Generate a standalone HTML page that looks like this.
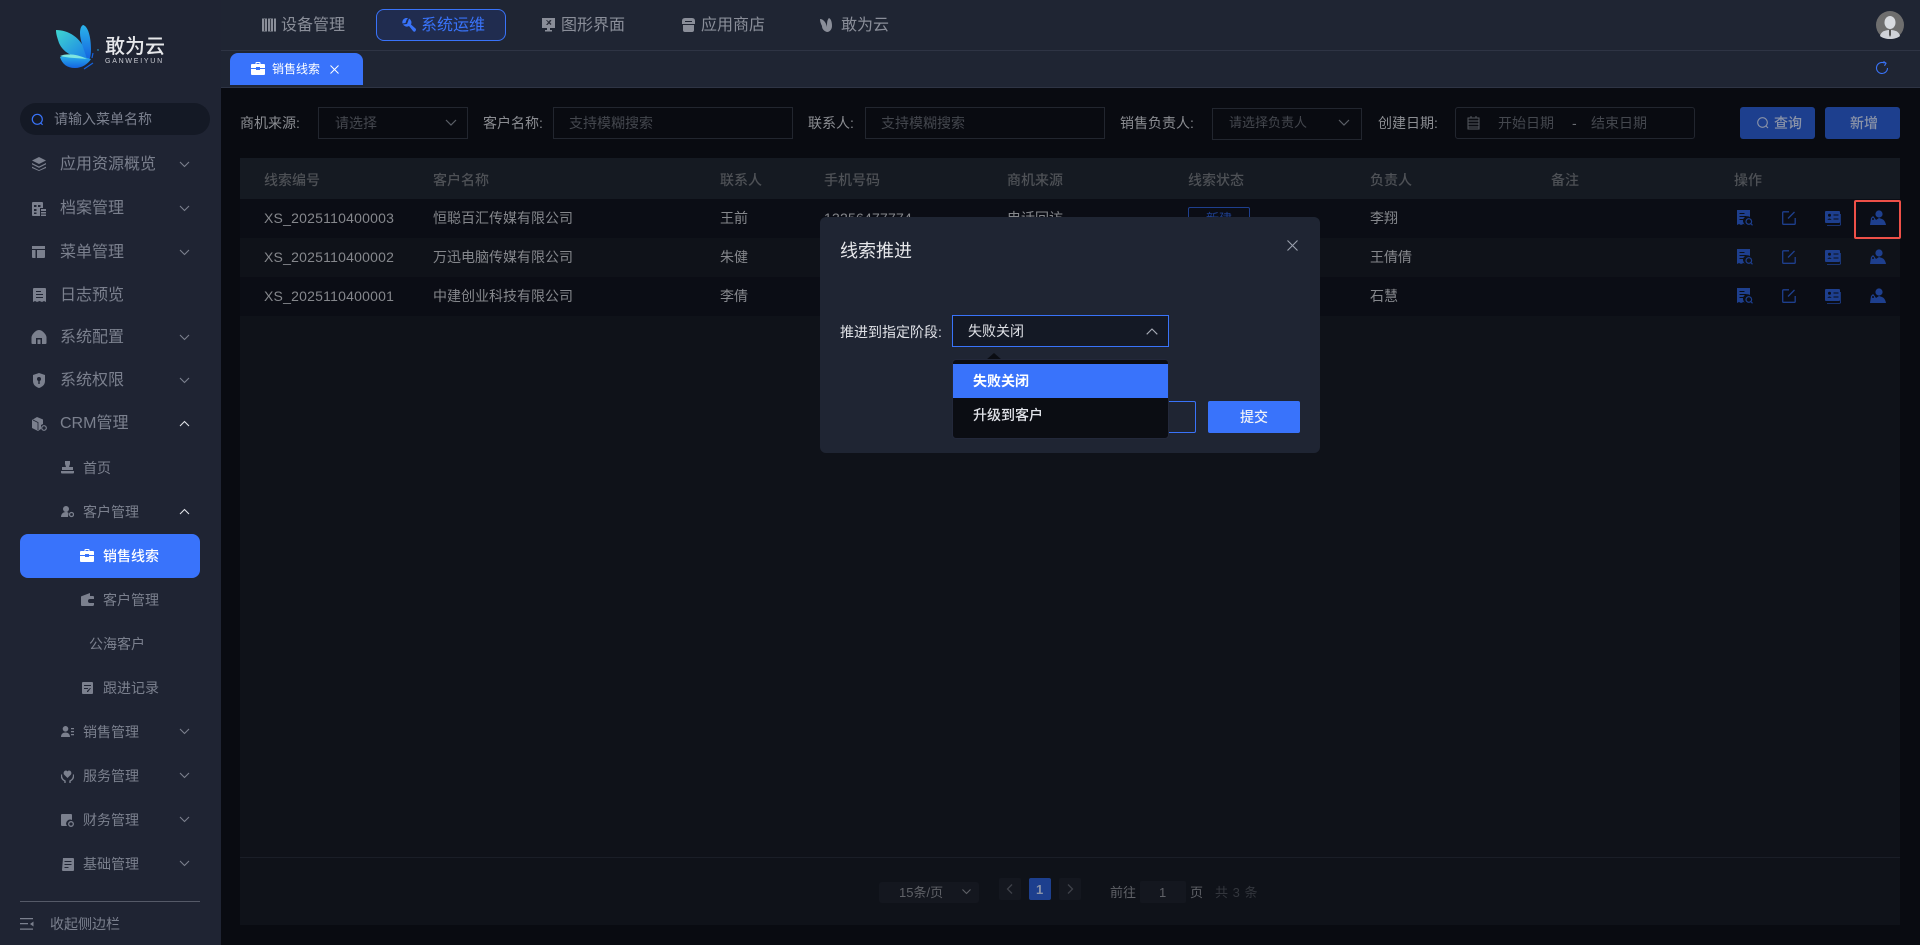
<!DOCTYPE html>
<html lang="zh"><head><meta charset="utf-8"><title>销售线索</title>
<style>
*{box-sizing:border-box}
html,body{margin:0;padding:0;width:1920px;height:945px;overflow:hidden;background:#090b11;font-family:"Liberation Sans","Noto Sans CJK SC",sans-serif}
.b{position:absolute}
.t{position:absolute;white-space:nowrap;line-height:20px;height:20px;font-size:14px}
svg{position:absolute;display:block}
.m{color:#7b808e;font-size:16px}
.s{color:#7b808e;font-size:14px}
.n{color:#8a8e99;font-size:16px}
.l{color:#8b8d92;font-size:14px}
.h{color:#4e5156;font-size:14px;font-weight:500}
.d{color:#85878c;font-size:14px}
.x{letter-spacing:.22px}
.p{color:#44474e;font-size:14px}
.ic{fill:#7b808e}
.ch{fill:none;stroke:#7b808e;stroke-width:1.1}
.cw{fill:none;stroke:#e0e2e8;stroke-width:1.1}
.a{fill:#1e3f8e}
</style></head><body>

<!-- sidebar -->
<div class="b" style="left:0;top:0;width:221px;height:945px;background:#1f2433"></div>
<svg style="left:54px;top:23px" width="48" height="48" viewBox="0 0 48 48">
<defs><linearGradient id="g1" x1="0" y1="0" x2="1" y2="1"><stop offset="0" stop-color="#3fd6d0"/><stop offset="1" stop-color="#1a7fe8"/></linearGradient>
<linearGradient id="g2" x1="0" y1="0" x2="0" y2="1"><stop offset="0" stop-color="#2bb4ea"/><stop offset="1" stop-color="#1463e0"/></linearGradient></defs>
<path d="M2 7C14 7 27 14 33 31 34 35 32 36 29 35 18 34 9 29 5 20 3 14 2 11 2 7Z" fill="url(#g1)"/>
<path d="M29 2C34 3 37 14 37 26 37 33 36 38 33 36 30 26 26 18 26 10 26 6 27 3 29 2Z" fill="url(#g2)"/>
<path d="M6 34C14 31 26 33 37 36 34 41 28 45 21 45 13 45 8 41 6 34Z" fill="url(#g2)"/>
<path d="M6 33C12 30 24 31 33 36 23 35 14 35 6 33Z" fill="#7fe6e0"/>
<path d="M30 46l9-6M39 30l-1 5" stroke="#1463e0" stroke-width="1.200" fill="none"/>
<circle cx="44" cy="27" r=".7" fill="#2bb4ea"/>
</svg>
<span class="t" style="left:105px;top:36px;font-size:20px;line-height:22px;height:22px;color:#e6e7ea;font-weight:500">敢为云</span>
<span class="t" style="left:105px;top:57px;font-size:7px;line-height:10px;height:10px;color:#c9cbd2;letter-spacing:1.75px">GANWEIYUN</span>

<div class="b" style="left:20px;top:103px;width:190px;height:32px;border-radius:16px;background:#141925"></div>
<svg style="left:31px;top:113px" width="13" height="13" viewBox="0 0 13 13"><circle cx="6.300" cy="6.300" r="5" fill="none" stroke="#3973f9" stroke-width="1.200"/><path d="M9.800 10l1.800 1.800" stroke="#3973f9" stroke-width="1.200"/></svg>
<span class="t s" style="left:54px;top:109px">请输入菜单名称</span>

<!-- main menu icons -->
<svg style="left:32px;top:157px" width="14" height="14" viewBox="0 0 14 14"><path class="ic" d="M7 0l7 3.500-7 3.500-7-3.500zM0 6l7 3.500 7-3.500v1.400l-7 3.500-7-3.500zM0 9.600l7 3.500 7-3.500V11l-7 3-7-3z"/></svg>
<span class="t m" style="left:60px;top:155px">应用资源概览</span>
<svg style="left:32px;top:202px" width="14" height="14" viewBox="0 0 14 14"><path class="ic" d="M1 0h9q1 0 1 1v5H8v8H1q-1 0-1-1V1q0-1 1-1zM9 7h5v2H9zM9 10h5v1.500H9zM9 12.500h5V14H9z"/><path d="M2 3h2.500v2H2zM6 3h2.500v2H6zM2 7h2.500v2H2zM2 10.500h2.500v1.500H2z" fill="#1f2433"/></svg>
<span class="t m" style="left:60px;top:199px">档案管理</span>
<svg style="left:32px;top:245px" width="14" height="14" viewBox="0 0 14 14"><path class="ic" d="M0 1h13v3H0zM0 5h3.500v8H1q-1 0-1-1zM5 5h8v7q0 1-1 1H5z"/></svg>
<span class="t m" style="left:60px;top:243px">菜单管理</span>
<svg style="left:33px;top:288px" width="13" height="14" viewBox="0 0 13 14"><path class="ic" d="M0 1q0-1 1-1h11q1 0 1 1v13l-2-1-2 1-2.500-1L4 14l-2-1-2 1z"/><path d="M3 3h5v1H3zM3 6h7v1H3zM3 9h7v1H3z" fill="#1f2433"/></svg>
<span class="t m" style="left:60px;top:286px">日志预览</span>
<svg style="left:31px;top:330px" width="16" height="14" viewBox="0 0 16 14"><path class="ic" d="M8 0c3 0 7 4 7.500 7v6q0 1-1 1H1.500q-1 0-1-1V7C1 4 5 0 8 0z"/><path d="M5 8h6v6H5z" fill="#1f2433"/><path d="M6.500 9.500h3V14h-3z" class="ic"/></svg>
<span class="t m" style="left:60px;top:328px">系统配置</span>
<svg style="left:32px;top:373px" width="14" height="15" viewBox="0 0 14 15"><path class="ic" d="M7 0l6 2v6c0 4-3 6-6 7-3-1-6-3-6-7V2z"/><circle cx="7" cy="6" r="2" fill="#1f2433"/><path d="M6.300 7h1.400v4H6.300z" fill="#1f2433"/></svg>
<span class="t m" style="left:60px;top:371px">系统权限</span>
<svg style="left:32px;top:417px" width="15" height="14" viewBox="0 0 15 14"><path class="ic" d="M5 0l6 2.500v4.500l-2 1v4l-3 2-6-3V3z"/><path d="M1 3l5 2.500V13" fill="none" stroke="#1f2433" stroke-width=".8"/><circle cx="12" cy="11" r="2.300" fill="none" stroke="#7b808e" stroke-width="1.200"/></svg>
<span class="t m" style="left:60px;top:414px;font-size:16px">CRM管理</span>

<svg style="left:61px;top:461px" width="13" height="13" viewBox="0 0 13 13"><path class="ic" d="M4 0h5v3L8 6h4v3H1V6h4L4 3zM0 10h13v1.500q0 1-1 1H1q-1 0-1-1z"/></svg>
<span class="t s" style="left:83px;top:458px">首页</span>
<svg style="left:61px;top:506px" width="13" height="12" viewBox="0 0 13 12"><circle cx="5" cy="3" r="3" class="ic"/><path class="ic" d="M0 11c0-3 2-5 5-5 1 0 2 .3 2.500 1L7 11z"/><circle cx="10.500" cy="8.500" r="2" fill="none" stroke="#7b808e" stroke-width="1.300"/></svg>
<span class="t s" style="left:83px;top:502px">客户管理</span>

<div class="b" style="left:20px;top:534px;width:180px;height:44px;border-radius:8px;background:#3973fb"></div>
<svg style="left:80px;top:549px" width="14" height="13" viewBox="0 0 14 13"><path fill="#fff" d="M4.500 2V1q0-1 1-1h3q1 0 1 1v1H13q1 0 1 1v3H9V5H5v1H0V3q0-1 1-1zM5.500 1v1h3V1zM0 7h5v1h4V7h5v5q0 1-1 1H1q-1 0-1-1z"/></svg>
<span class="t" style="left:103px;top:546px;color:#fff;font-weight:500">销售线索</span>

<svg style="left:81px;top:593px" width="13" height="13" viewBox="0 0 13 13"><path class="ic" d="M0 4q0-1 1-1l8-3v3h3q1 0 1 1v2H9q-2 0-2 2t2 2h4v1.500q0 1.500-1.500 1.500H1q-1 0-1-1z"/></svg>
<span class="t s" style="left:103px;top:590px">客户管理</span>
<span class="t s" style="left:89px;top:634px">公海客户</span>
<svg style="left:82px;top:682px" width="11" height="12" viewBox="0 0 11 12"><path class="ic" d="M1 0h9q1 0 1 1v10q0 1-1 1H1q-1 0-1-1V1q0-1 1-1z"/><path d="M2 3h7v1H2zM2 6h4v1H2zM9 6L6 10H5V9l3-3z" fill="#1f2433"/></svg>
<span class="t s" style="left:103px;top:678px">跟进记录</span>
<svg style="left:61px;top:726px" width="13" height="11" viewBox="0 0 13 11"><circle cx="4.500" cy="2.800" r="2.800" class="ic"/><path class="ic" d="M0 11c0-3 2-4.500 4.500-4.500S9 8 9 11zM10 2h3v1.300h-3zM10 5h3v1.300h-3zM10 8h3v1.300h-3z"/></svg>
<span class="t s" style="left:83px;top:722px">销售管理</span>
<svg style="left:61px;top:770px" width="13" height="13" viewBox="0 0 13 13"><path class="ic" d="M6.500 8L3 4.500C2 3 3 .5 5 .5c.7 0 1.200.4 1.500 1 .3-.6.800-1 1.500-1 2 0 3 2.500 2 4z"/><path d="M.5 4.500C0 8 2 10 4 11v2M12.500 4.500C13 8 11 10 9 11v2" fill="none" stroke="#7b808e" stroke-width="1.400"/></svg>
<span class="t s" style="left:83px;top:766px">服务管理</span>
<svg style="left:61px;top:814px" width="13" height="13" viewBox="0 0 13 13"><path class="ic" d="M1 0h9q1 0 1 1v5a4 4 0 0 0-5 6H1q-1 0-1-1V1q0-1 1-1z"/><circle cx="10" cy="10" r="2.300" fill="none" stroke="#7b808e" stroke-width="1.300"/></svg>
<span class="t s" style="left:83px;top:810px">财务管理</span>
<svg style="left:61px;top:858px" width="13" height="13" viewBox="0 0 13 13"><path class="ic" d="M2 0h10q1 0 1 1v11q0 1-1 1H2q-1 0-1-1z"/><path d="M3.500 3h7v1h-7zM3.500 6h7v1h-7zM3.500 9h4v1h-4z" fill="#1f2433"/></svg>
<span class="t s" style="left:83px;top:854px">基础管理</span>

<!-- chevrons -->
<svg style="left:179px;top:161px" width="11" height="7"><path class="ch" d="M1 1l4.500 4.500L10 1"/></svg>
<svg style="left:179px;top:205px" width="11" height="7"><path class="ch" d="M1 1l4.500 4.500L10 1"/></svg>
<svg style="left:179px;top:249px" width="11" height="7"><path class="ch" d="M1 1l4.500 4.500L10 1"/></svg>
<svg style="left:179px;top:334px" width="11" height="7"><path class="ch" d="M1 1l4.500 4.500L10 1"/></svg>
<svg style="left:179px;top:377px" width="11" height="7"><path class="ch" d="M1 1l4.500 4.500L10 1"/></svg>
<svg style="left:179px;top:420px" width="11" height="7"><path class="cw" d="M1 6l4.500-4.500L10 6"/></svg>
<svg style="left:179px;top:508px" width="11" height="7"><path class="cw" d="M1 6l4.500-4.500L10 6"/></svg>
<svg style="left:179px;top:728px" width="11" height="7"><path class="ch" d="M1 1l4.500 4.500L10 1"/></svg>
<svg style="left:179px;top:772px" width="11" height="7"><path class="ch" d="M1 1l4.500 4.500L10 1"/></svg>
<svg style="left:179px;top:816px" width="11" height="7"><path class="ch" d="M1 1l4.500 4.500L10 1"/></svg>
<svg style="left:179px;top:860px" width="11" height="7"><path class="ch" d="M1 1l4.500 4.500L10 1"/></svg>

<div class="b" style="left:20px;top:901px;width:180px;height:1px;background:#555a68"></div>
<svg style="left:20px;top:918px" width="14" height="12" viewBox="0 0 14 12"><path class="ic" d="M0 0h13v1.200H0zM0 5h8v1.200H0zM0 10.500h13v1.200H0zM13.500 3.500v5L10 6z"/></svg>
<span class="t s" style="left:50px;top:914px">收起侧边栏</span>

<!-- top bar -->
<div class="b" style="left:221px;top:0;width:1699px;height:88px;background:#1f2533"></div>
<div class="b" style="left:221px;top:50px;width:1699px;height:1px;background:#2e3444"></div>
<div class="b" style="left:221px;top:87px;width:1699px;height:1px;background:#2e3444"></div>

<svg style="left:262px;top:18px" width="14" height="14" viewBox="0 0 14 14"><path fill="#8a8e99" d="M0 .5h5v13H0zM6 .5h5v13H6zM12 .5h2v13h-2z"/><path fill="#3a3e49" d="M2 1h1v12H2zM8 1h1v12H8z"/></svg>
<span class="t n" style="left:281px;top:16px">设备管理</span>
<div class="b" style="left:376px;top:9px;width:130px;height:32px;border:1px solid #3973f9;border-radius:8px;background:#202c4f"></div>
<svg style="left:402px;top:18px" width="14" height="14" viewBox="0 0 14 14"><path fill="#3973f9" d="M6 0a4.500 4.500 0 0 0-5.500 5.500l3-.5 1-3zM1 6.500a4.500 4.500 0 0 0 6 1.500l4 5q1.500 1.500 2.500 0t0-2.500L9 6.500A4.500 4.500 0 0 0 7 .5L6 3.500 5 6z"/></svg>
<span class="t" style="left:421px;top:16px;font-size:16px;color:#3973f9">系统运维</span>
<svg style="left:542px;top:18px" width="13" height="14" viewBox="0 0 13 14"><path fill="#8a8e99" d="M0 0h13v10H8v2h2v1.500H3V12h2v-2H0z"/><path fill="#2b2f3b" d="M4 2l2 2.500L4 7h1.500L7 5.500 8.500 7 9.500 6 8 4.500 9.500 2H8L6.500 3.500 5 2z"/></svg>
<span class="t n" style="left:561px;top:16px">图形界面</span>
<svg style="left:682px;top:18px" width="13" height="14" viewBox="0 0 13 14"><path fill="#8a8e99" d="M3 0h7q3 0 3 3v3H0V3q0-3 3-3zM1 7h11v5q0 2-2 2H3q-2 0-2-2z"/><path fill="#1f2533" d="M3 3h7v1H3zM0 6.200h13v.8H0z"/></svg>
<span class="t n" style="left:701px;top:16px">应用商店</span>
<svg style="left:820px;top:18px" width="13" height="14" viewBox="0 0 13 14"><path fill="#8a8e99" d="M0 1c3 0 6 3 7 8 0-4 0-7 2-9 2 1 3 4 3 8 0 3-2 6-5 6-3-1-5-3-5-6-1-2-2-4-2-7z"/></svg>
<span class="t n" style="left:841px;top:16px">敢为云</span>

<!-- avatar -->
<svg style="left:1876px;top:11px" width="28" height="28" viewBox="0 0 28 28"><circle cx="14" cy="14" r="14" fill="#6e6e6e"/><ellipse cx="14" cy="11.500" rx="5.500" ry="6.500" fill="#d8dbe0"/><path d="M4 25c1-5 6-6 10-6s9 1 10 6c-5 4-15 4-20 0z" fill="#cfd2d8"/><path d="M13 19h2v5l-1 2-1-2z" fill="#555"/></svg>

<!-- tab -->
<div class="b" style="left:230px;top:53px;width:133px;height:32px;background:#3973fb;border-radius:8px 8px 0 0"></div>
<svg style="left:251px;top:62px" width="14" height="13" viewBox="0 0 14 13"><path fill="#fff" d="M4.500 2V1q0-1 1-1h3q1 0 1 1v1H13q1 0 1 1v3H9V5H5v1H0V3q0-1 1-1zM5.500 1v1h3V1zM0 7h5v1h4V7h5v5q0 1-1 1H1q-1 0-1-1z"/></svg>
<span class="t" style="left:272px;top:59px;font-size:12px;color:#fff">销售线索</span>
<svg style="left:330px;top:65px" width="9" height="9"><path d="M.5.500l8 8M8.500.500l-8 8" stroke="#fff" stroke-width="1"/></svg>
<svg style="left:1875px;top:61px" width="14" height="14" viewBox="0 0 14 14"><path d="M12.500 7A5.500 5.500 0 1 1 9.500 2.100" fill="none" stroke="#3973f9" stroke-width="1.100"/><path d="M8.500.500l2.500 1.700-1.500 2.600" fill="none" stroke="#3973f9" stroke-width="1.100"/></svg>

<!-- filters -->
<span class="t l" style="left:240px;top:113px">商机来源:</span>
<div class="b" style="left:318px;top:107px;width:150px;height:32px;border:1px solid #22262f"></div>
<span class="t p" style="left:335px;top:113px">请选择</span>
<svg style="left:445px;top:119px" width="12" height="8"><path d="M1 1l5 5 5-5" fill="none" stroke="#5c6068" stroke-width="1.200"/></svg>
<span class="t l" style="left:483px;top:113px">客户名称:</span>
<div class="b" style="left:553px;top:107px;width:240px;height:32px;border:1px solid #22262f"></div>
<span class="t p" style="left:569px;top:113px">支持模糊搜索</span>
<span class="t l" style="left:808px;top:113px">联系人:</span>
<div class="b" style="left:865px;top:107px;width:240px;height:32px;border:1px solid #22262f"></div>
<span class="t p" style="left:881px;top:113px">支持模糊搜索</span>
<span class="t l" style="left:1120px;top:113px">销售负责人:</span>
<div class="b" style="left:1212px;top:108px;width:150px;height:32px;border:1px solid #22262f"></div>
<span class="t p" style="left:1229px;top:113px;font-size:13px">请选择负责人</span>
<svg style="left:1338px;top:119px" width="12" height="8"><path d="M1 1l5 5 5-5" fill="none" stroke="#5c6068" stroke-width="1.200"/></svg>
<span class="t l" style="left:1378px;top:113px">创建日期:</span>
<div class="b" style="left:1455px;top:107px;width:240px;height:32px;border:1px solid #22262f;border-radius:3px"></div>
<svg style="left:1467px;top:116px" width="13" height="14" viewBox="0 0 13 14"><path d="M1 2h11v11H1zM1 5h11M1 8h11M1 11h11M4 0v2M9 0v2" fill="none" stroke="#55585f" stroke-width="1"/></svg>
<span class="t p" style="left:1498px;top:113px">开始日期</span>
<span class="t p" style="left:1572px;top:113px;color:#6a6d73">-</span>
<span class="t p" style="left:1591px;top:113px">结束日期</span>

<div class="b" style="left:1740px;top:107px;width:75px;height:32px;background:#1d3f8e;border-radius:3px"></div>
<svg style="left:1757px;top:117px" width="12" height="12" viewBox="0 0 12 12"><circle cx="5.500" cy="5.500" r="4.800" fill="none" stroke="#8a93a8" stroke-width="1.100"/><path d="M9 9l2 2" stroke="#8a93a8" stroke-width="1.100"/></svg>
<span class="t" style="left:1774px;top:113px;color:#8a93a8;font-weight:500">查询</span>
<div class="b" style="left:1825px;top:107px;width:75px;height:32px;background:#1d3f8e;border-radius:3px"></div>
<span class="t" style="left:1850px;top:113px;color:#8a93a8;font-weight:500">新增</span>

<!-- table -->
<div class="b" style="left:240px;top:158px;width:1660px;height:767px;background:#0f1219"></div>
<div class="b" style="left:240px;top:158px;width:1660px;height:41px;background:#151a22"></div>
<div class="b" style="left:240px;top:199px;width:1660px;height:39px;background:#0b0d15"></div>
<div class="b" style="left:240px;top:238px;width:1660px;height:39px;background:#0f1219"></div>
<div class="b" style="left:240px;top:277px;width:1660px;height:39px;background:#0b0d15"></div>
<div class="b" style="left:240px;top:857px;width:1660px;height:1px;background:#1a1e27"></div>

<span class="t h" style="left:264px;top:170px">线索编号</span>
<span class="t h" style="left:433px;top:170px">客户名称</span>
<span class="t h" style="left:720px;top:170px">联系人</span>
<span class="t h" style="left:824px;top:170px">手机号码</span>
<span class="t h" style="left:1007px;top:170px">商机来源</span>
<span class="t h" style="left:1188px;top:170px">线索状态</span>
<span class="t h" style="left:1370px;top:170px">负责人</span>
<span class="t h" style="left:1551px;top:170px">备注</span>
<span class="t h" style="left:1734px;top:170px">操作</span>

<span class="t d x" style="left:264px;top:208px">XS_2025110400003</span>
<span class="t d" style="left:433px;top:208px">恒聪百汇传媒有限公司</span>
<span class="t d" style="left:720px;top:208px">王前</span>
<span class="t d x" style="left:824px;top:208px">13256477774</span>
<span class="t d" style="left:1007px;top:208px">电话回访</span>
<div class="b" style="left:1188px;top:207px;width:62px;height:24px;border:1px solid #1e3f8e;border-radius:2px"></div>
<span class="t" style="left:1206px;top:209px;font-size:13px;color:#1e3f8e">新建</span>
<span class="t d" style="left:1370px;top:208px">李翔</span>

<span class="t d x" style="left:264px;top:247px">XS_2025110400002</span>
<span class="t d" style="left:433px;top:247px">万迅电脑传媒有限公司</span>
<span class="t d" style="left:720px;top:247px">朱健</span>
<span class="t d" style="left:1370px;top:247px">王倩倩</span>

<span class="t d x" style="left:264px;top:286px">XS_2025110400001</span>
<span class="t d" style="left:433px;top:286px">中建创业科技有限公司</span>
<span class="t d" style="left:720px;top:286px">李倩</span>
<span class="t d" style="left:1370px;top:286px">石慧</span>

<!-- action icons row 1 -->
<svg style="left:1737px;top:210px" width="16" height="16" viewBox="0 0 16 16"><path class="a" d="M0 0h13v7a4.500 4.500 0 0 0-5 7.500L6.500 14 4 15l-2-1-2 1z"/><path d="M2.500 3h5v1h-5zM2.500 6h7v1h-7zM2.500 9h4v1h-4z" fill="#0b0d15"/><circle cx="11.800" cy="11.500" r="2.800" fill="none" stroke="#1e3f8e" stroke-width="1.200"/><path d="M13.800 13.500l1.700 1.800" stroke="#1e3f8e" stroke-width="1.200"/></svg>
<svg style="left:1782px;top:211px" width="14" height="14" viewBox="0 0 14 14"><path d="M7 .8H1.500q-.8 0-.8.800v10.900q0 .8.800.8h10.900q.8 0 .8-.8V7" fill="none" stroke="#1e3f8e" stroke-width="1.300"/><path d="M12.500 1L6 7.500" stroke="#1e3f8e" stroke-width="1.300"/></svg>
<svg style="left:1825px;top:211px" width="16" height="15" viewBox="0 0 16 15"><path class="a" d="M1 0h13q1 0 1 1v10q0 1-1 1H1q-1 0-1-1V1q0-1 1-1z"/><circle cx="4.500" cy="4.300" r="1.500" fill="#0b0d15"/><path d="M2.300 8.800q2.200-2.600 4.400 0zM8.500 3.500h5v1h-5zM8.500 7.500h5v1h-5z" fill="#0b0d15"/><path d="M15.600 3v10q0 1.400-1.400 1.400H2" fill="none" stroke="#1e3f8e" stroke-width=".8"/></svg>
<svg style="left:1870px;top:210px" width="16" height="16" viewBox="0 0 16 16"><circle cx="9" cy="4" r="3.600" class="a"/><path class="a" d="M0 15l1-7 2-2 1 1 2 3 3-2 3 1q3 1 4 6z"/><circle cx="3" cy="9" r="1" fill="#0b0d15"/></svg>
<div class="b" style="left:1854px;top:200px;width:47px;height:39px;border:2px solid #ee5048;border-radius:2px"></div>

<!-- row 2 -->
<svg style="left:1737px;top:249px" width="16" height="16" viewBox="0 0 16 16"><path class="a" d="M0 0h13v7a4.500 4.500 0 0 0-5 7.500L6.500 14 4 15l-2-1-2 1z"/><path d="M2.500 3h5v1h-5zM2.500 6h7v1h-7zM2.500 9h4v1h-4z" fill="#0f1219"/><circle cx="11.800" cy="11.500" r="2.800" fill="none" stroke="#1e3f8e" stroke-width="1.200"/><path d="M13.800 13.500l1.700 1.800" stroke="#1e3f8e" stroke-width="1.200"/></svg>
<svg style="left:1782px;top:250px" width="14" height="14" viewBox="0 0 14 14"><path d="M7 .8H1.500q-.8 0-.8.800v10.900q0 .8.800.8h10.900q.8 0 .8-.8V7" fill="none" stroke="#1e3f8e" stroke-width="1.300"/><path d="M12.500 1L6 7.500" stroke="#1e3f8e" stroke-width="1.300"/></svg>
<svg style="left:1825px;top:250px" width="16" height="15" viewBox="0 0 16 15"><path class="a" d="M1 0h13q1 0 1 1v10q0 1-1 1H1q-1 0-1-1V1q0-1 1-1z"/><circle cx="4.500" cy="4.300" r="1.500" fill="#0f1219"/><path d="M2.300 8.800q2.200-2.600 4.400 0zM8.500 3.500h5v1h-5zM8.500 7.500h5v1h-5z" fill="#0f1219"/><path d="M15.600 3v10q0 1.400-1.400 1.400H2" fill="none" stroke="#1e3f8e" stroke-width=".8"/></svg>
<svg style="left:1870px;top:249px" width="16" height="16" viewBox="0 0 16 16"><circle cx="9" cy="4" r="3.600" class="a"/><path class="a" d="M0 15l1-7 2-2 1 1 2 3 3-2 3 1q3 1 4 6z"/><circle cx="3" cy="9" r="1" fill="#0f1219"/></svg>

<!-- row 3 -->
<svg style="left:1737px;top:288px" width="16" height="16" viewBox="0 0 16 16"><path class="a" d="M0 0h13v7a4.500 4.500 0 0 0-5 7.500L6.500 14 4 15l-2-1-2 1z"/><path d="M2.500 3h5v1h-5zM2.500 6h7v1h-7zM2.500 9h4v1h-4z" fill="#0b0d15"/><circle cx="11.800" cy="11.500" r="2.800" fill="none" stroke="#1e3f8e" stroke-width="1.200"/><path d="M13.800 13.500l1.700 1.800" stroke="#1e3f8e" stroke-width="1.200"/></svg>
<svg style="left:1782px;top:289px" width="14" height="14" viewBox="0 0 14 14"><path d="M7 .8H1.500q-.8 0-.8.800v10.900q0 .8.800.8h10.900q.8 0 .8-.8V7" fill="none" stroke="#1e3f8e" stroke-width="1.300"/><path d="M12.500 1L6 7.500" stroke="#1e3f8e" stroke-width="1.300"/></svg>
<svg style="left:1825px;top:289px" width="16" height="15" viewBox="0 0 16 15"><path class="a" d="M1 0h13q1 0 1 1v10q0 1-1 1H1q-1 0-1-1V1q0-1 1-1z"/><circle cx="4.500" cy="4.300" r="1.500" fill="#0b0d15"/><path d="M2.300 8.800q2.200-2.600 4.400 0zM8.500 3.500h5v1h-5zM8.500 7.500h5v1h-5z" fill="#0b0d15"/><path d="M15.600 3v10q0 1.400-1.400 1.400H2" fill="none" stroke="#1e3f8e" stroke-width=".8"/></svg>
<svg style="left:1870px;top:288px" width="16" height="16" viewBox="0 0 16 16"><circle cx="9" cy="4" r="3.600" class="a"/><path class="a" d="M0 15l1-7 2-2 1 1 2 3 3-2 3 1q3 1 4 6z"/><circle cx="3" cy="9" r="1" fill="#0b0d15"/></svg>

<!-- pagination -->
<div class="b" style="left:879px;top:882px;width:100px;height:21px;background:#14171f;border-radius:3px"></div>
<span class="t" style="left:899px;top:883px;font-size:13px;color:#5f6167">15条/页</span>
<svg style="left:962px;top:889px" width="9" height="6"><path d="M.5.500l4 4 4-4" fill="none" stroke="#5f6167" stroke-width="1.100"/></svg>
<div class="b" style="left:999px;top:878px;width:22px;height:22px;background:#14171f;border-radius:2px"></div>
<svg style="left:1006px;top:884px" width="7" height="10"><path d="M6 .500L1.500 5 6 9.500" fill="none" stroke="#3f424a" stroke-width="1.300"/></svg>
<div class="b" style="left:1029px;top:878px;width:22px;height:22px;background:#1d3f8e;border-radius:2px"></div>
<span class="t" style="left:1036px;top:880px;font-size:13px;color:#8a93a8;font-weight:700">1</span>
<div class="b" style="left:1059px;top:878px;width:22px;height:22px;background:#14171f;border-radius:2px"></div>
<svg style="left:1067px;top:884px" width="7" height="10"><path d="M1 .500L5.500 5 1 9.500" fill="none" stroke="#3f424a" stroke-width="1.300"/></svg>
<span class="t" style="left:1110px;top:883px;font-size:13px;color:#5f6167">前往</span>
<div class="b" style="left:1140px;top:881px;width:46px;height:22px;background:#14171f;border-radius:2px"></div>
<span class="t" style="left:1159px;top:883px;font-size:13px;color:#5f6167">1</span>
<span class="t" style="left:1190px;top:883px;font-size:13px;color:#5f6167">页</span>
<span class="t" style="left:1215px;top:883px;font-size:13px;color:#33363d;word-spacing:1px">共 3 条</span>

<!-- modal -->
<div class="b" style="left:820px;top:217px;width:500px;height:236px;background:#1f2533;border-radius:6px"></div>
<span class="t" style="left:840px;top:239px;font-size:18px;line-height:24px;height:24px;color:#e6e7ea">线索推进</span>
<svg style="left:1287px;top:240px" width="11" height="11"><path d="M.5.500l10 10M10.500.500l-10 10" stroke="#9aa0ad" stroke-width="1.100"/></svg>
<span class="t" style="left:840px;top:322px;color:#dfe1e6">推进到指定阶段:</span>
<div class="b" style="left:952px;top:315px;width:217px;height:32px;border:1px solid #3973f9;background:#141925"></div>
<span class="t" style="left:968px;top:321px;color:#dfe1e6">失败关闭</span>
<svg style="left:1146px;top:328px" width="12" height="7"><path d="M.7 6.300L6 1l5.300 5.300" fill="none" stroke="#a7abb5" stroke-width="1.100"/></svg>
<div class="b" style="left:1150px;top:401px;width:46px;height:32px;border:1px solid #3973f9;border-left:0;border-radius:0 2px 2px 0"></div>
<div class="b" style="left:1208px;top:401px;width:92px;height:32px;background:#3973fb;border-radius:2px"></div>
<span class="t" style="left:1240px;top:407px;color:#eef1f8;font-weight:500">提交</span>

<!-- dropdown -->
<svg style="left:986px;top:353px" width="16" height="7"><path d="M0 7L8 0l8 7z" fill="#0b0d13"/></svg>
<div class="b" style="left:952px;top:359px;width:217px;height:80px;background:#0b0d13;border:1px solid #23283a;border-radius:4px"></div>
<div class="b" style="left:953px;top:364px;width:215px;height:34px;background:#3973fb"></div>
<span class="t" style="left:973px;top:371px;color:#fff;font-weight:700">失败关闭</span>
<span class="t" style="left:973px;top:405px;color:#e2e4ea;font-weight:500">升级到客户</span>

</body></html>
